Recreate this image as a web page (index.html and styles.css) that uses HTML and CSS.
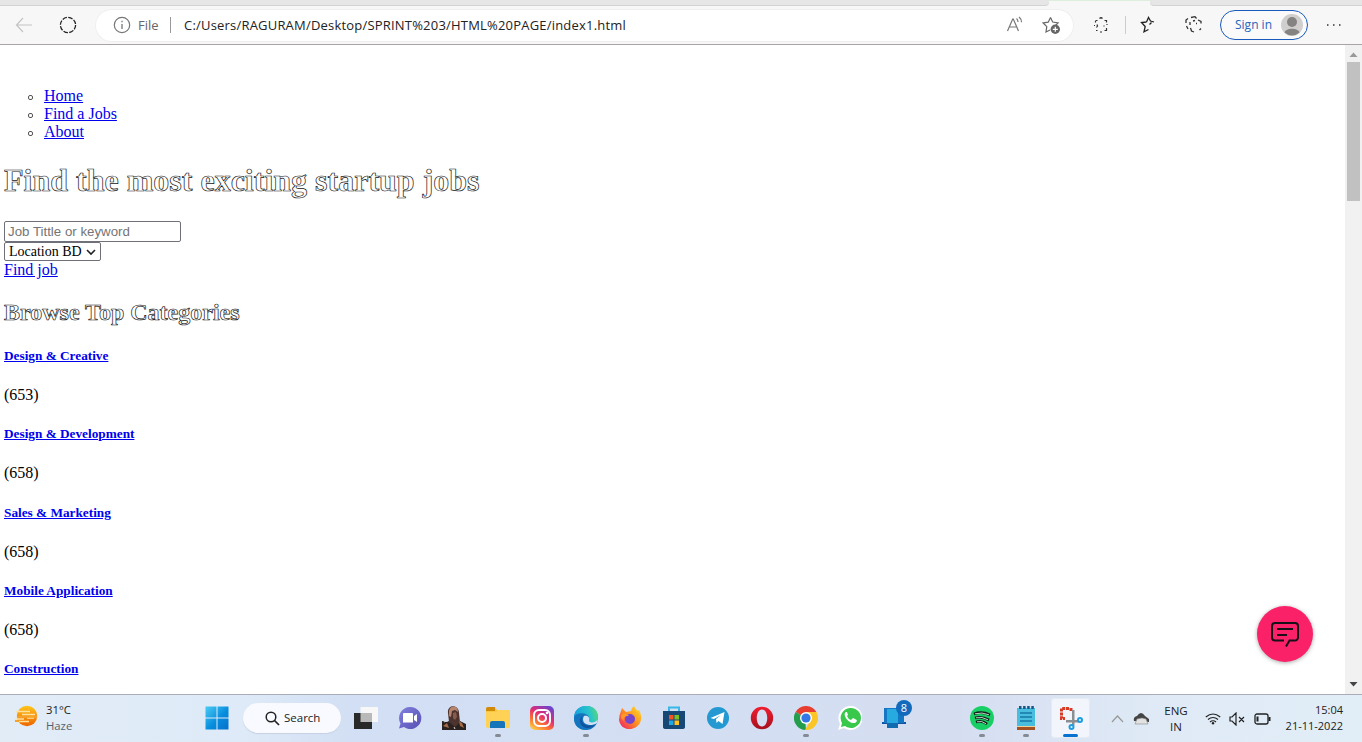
FILE: index.html
```html
<!DOCTYPE html>
<html lang="en">
<head>
<meta charset="utf-8">
<title>Find a Job</title>
<link rel="stylesheet" href="styles.css">
</head>
<body>
<div class="screen">
  <div class="tabs"><div class="tabs-left"></div><div class="tab-active"></div><div class="tabs-right"></div></div>
  <header class="toolbar">
    <svg class="back" width="18" height="16" viewBox="0 0 18 16"><path d="M8 1 1.5 8 8 15M1.5 8H17" fill="none" stroke="#c4c4c4" stroke-width="1.2"/></svg>
    <svg class="reload" width="18" height="18" viewBox="0 0 18 18"><circle cx="9" cy="9" r="7.6" fill="none" stroke="#222" stroke-width="1.3" stroke-dasharray="4.6 1.37"/></svg>
    <div class="address">
      <svg class="info" width="18" height="18" viewBox="0 0 18 18"><circle cx="9" cy="9" r="7.7" fill="none" stroke="#777" stroke-width="1.2"/><path d="M9 8v5M9 4.8v1.5" stroke="#777" stroke-width="1.3"/></svg>
      <span class="file">File</span><i class="bar"></i>
      <span class="url">C:/Users/RAGURAM/Desktop/SPRINT%203/HTML%20PAGE/index1.html</span>
      <svg class="aloud" width="18" height="18" viewBox="0 0 18 18"><path d="M1.500 15 6.700 3h.6l5.200 12M3.300 11h7.400M10.500 2.500c1 .8 1.500 2 1.500 3.400M13 1c1.600 1.200 2.500 3 2.500 5.300" fill="none" stroke="#777" stroke-width="1.200"/></svg>
      <svg class="fav" width="19" height="19" viewBox="0 0 19 19"><path d="M8.500 1.500 10.700 6l5.400.8-3.600 3.600M8.500 1.500 6.200 6.200 1.200 7l3.600 3.700L4 16l4-2" fill="none" stroke="#666" stroke-width="1.200"/><circle cx="13.300" cy="13.300" r="4.700" fill="#666"/><path d="M13.300 10.800v5M10.800 13.300h5" stroke="#fff" stroke-width="1.200"/></svg>
    </div>
    <svg class="ext" width="18" height="18" viewBox="0 0 18 18"><path d="M7.500 2.500q1.500-1.500 3 0M3.500 4.500h2M12.500 4.500h2v2M3.500 5v1.500M2 9.500h1M5 8.500l.5 1.500-1 1.500M15 8v1M12 9.500v1M14.500 12v2.500h-2M4 14.500h1.500M8 16h2" fill="none" stroke="#333" stroke-width="1.200"/></svg>
    <i class="tool-line"></i>
    <svg class="star" width="18" height="18" viewBox="0 0 18 18"><path d="M6.500 6 1.500 6.500 5.200 10.500 4 15.800l4.500-2.300M6.500 6 8.500 1.500 10.500 5l3.500 1M11.500 6.500 9.500 8.500" fill="none" stroke="#222" stroke-width="1.300"/></svg>
    <svg class="coll" width="18" height="18" viewBox="0 0 18 18"><path d="M3 13 1.500 10M1 7V4l2-1.500M6 1.500l4-.8 1.500 1.800M5 6v3M5.500 12l1 3 2.500 1M8 5l2-.5M13 4l3 1.500v2M11 7.500h1M14.500 14l1.500-1.500" fill="none" stroke="#333" stroke-width="1.300"/></svg>
    <div class="signin"><span>Sign in</span>
      <svg width="22" height="22" viewBox="0 0 22 22"><circle cx="11" cy="11" r="11" fill="#d1cfcd"/><circle cx="11" cy="8" r="5" fill="#858381"/><path d="M3.500 18.500C5 13.500 17 13.500 18.500 18.500A11 11 0 0 1 3.500 18.500" fill="#858381"/></svg>
    </div>
    <svg class="more" width="16" height="4" viewBox="0 0 16 4"><path d="M1 2h1.500M7 2h1.500M13 2h1.500" stroke="#333" stroke-width="1.600"/></svg>
  </header>

  <div class="viewport">
    <main class="page">
      <ul class="nav"><li><a href="#">Home</a></li><li><a href="#">Find a Jobs</a></li><li><a href="#">About</a></li></ul>
      <h1>Find the most exciting startup jobs</h1>
      <div class="field"><input class="keyword" type="text" placeholder="Job Tittle or keyword"></div>
      <div class="location"><span>Location BD</span><svg width="10" height="8" viewBox="0 0 10 8"><path d="m1 2 4 4 4-4" fill="none" stroke="#222" stroke-width="1.600"/></svg></div>
      <a class="find" href="#">Find job</a>
      <h2>Browse Top Categories</h2>
      <section class="category"><h5><a href="#">Design &amp; Creative</a></h5><p>(653)</p></section>
      <section class="category"><h5><a href="#">Design &amp; Development</a></h5><p>(658)</p></section>
      <section class="category"><h5><a href="#">Sales &amp; Marketing</a></h5><p>(658)</p></section>
      <section class="category"><h5><a href="#">Mobile Application</a></h5><p>(658)</p></section>
      <section class="category"><h5><a href="#">Construction</a></h5></section>
    </main>
    <div class="scrollbar">
      <svg width="9" height="5" viewBox="0 0 9 5"><path d="M.5 5 4.500.5l4 4.500z" fill="#999"/></svg>
      <i class="thumb"></i>
      <svg class="down" width="9" height="5" viewBox="0 0 9 5"><path d="M.5 0 4.500 4.500 8.500 0z" fill="#444"/></svg>
    </div>
    <div class="chat"><svg width="30" height="28" viewBox="0 0 30 28"><path d="M14 20.500H5a3 3 0 0 1-3-3V6a3 3 0 0 1 3-3h20a3 3 0 0 1 3 3v11.500a3 3 0 0 1-3 3h-5.500l-3.500 6M7 9h16M7 15h10" fill="none" stroke="#181018" stroke-width="2"/></svg></div>
  </div>

  <footer class="taskbar">
    <svg class="weather" width="24" height="22" viewBox="0 0 24 22"><defs><linearGradient id="sun" x2="0" y2="1"><stop stop-color="#ffc51b"/><stop offset="1" stop-color="#ee6500"/></linearGradient></defs><circle cx="12" cy="11" r="10.200" fill="url(#sun)"/><path d="M1 6.500h14M7 9.500h13M0 14h9M12 13h7M3 16.500h11" stroke="#ffe1a0" stroke-width="1.500"/><path d="M2 11.800h20M0 16h4" stroke="#f5a22b" stroke-width="1.800"/></svg>
    <div class="temp"><span>31°C</span><span class="haze">Haze</span></div>
    <svg class="start" width="24" height="24" viewBox="0 0 24 24"><defs><linearGradient id="win" x2="1" y2="1"><stop stop-color="#4bcbf4"/><stop offset=".55" stop-color="#078ddd"/><stop offset="1" stop-color="#0670cc"/></linearGradient></defs><path d="M.5.500h11v11H.5zM12.500.500h11v11h-11zM.5 12.500h11v11H.5zM12.500 12.500h11v11h-11z" fill="url(#win)"/></svg>
    <div class="search"><svg width="15" height="15" viewBox="0 0 15 15"><circle cx="6" cy="6" r="4.800" fill="none" stroke="#222" stroke-width="1.500"/><path d="m9.500 9.500 4.500 4.500" stroke="#222" stroke-width="1.700"/></svg><span>Search</span></div>
    <div class="apps">
      <div class="app"><svg viewBox="0 0 24 24"><path d="M6.500 1H24v15H6.500z" fill="#f7f7f7"/><path d="M0 7h18v16H0z" fill="#292929"/><path d="M6.500 7H18v9H6.500z" fill="#b9b9b9"/></svg></div>
      <div class="app"><svg viewBox="0 0 24 24"><defs><linearGradient id="teams" x2="1" y2="1"><stop stop-color="#8280df"/><stop offset="1" stop-color="#5650b3"/></linearGradient></defs><path d="M12 1a11 11 0 1 1-6 20l-5 1.500 1.500-5A11 11 0 0 1 12 1" fill="url(#teams)"/><path d="M6 7h8a1 1 0 0 1 1 1v8.500H5V8q0-1 1-1m10 3 3-2v8l-3-2z" fill="#fff"/></svg></div>
      <div class="app"><svg viewBox="0 0 24 24"><path d="M0 24v-9l5 1 4-2 9 1 6 3v6z" fill="#2b211e"/><path d="M6 7C5-2 17-2 17 7l1 9-5 5-6-5z" fill="#4c332d"/><path d="M7 5c1-6 9-6 9 1l-3-2-3 1-1 6-2-1z" fill="#b5856f"/><path d="m11 7 3-1 1 5-2 3-2-2z" fill="#855c4d"/><path d="m1 20 4-3 2 5zM17 15l3 2 2 5-4-2z" fill="#a46b49"/><path d="M2 16l2-1M12 21l1 2" stroke="#ddd"/></svg></div>
      <div class="app run"><svg viewBox="0 0 24 24"><path d="M0 3q0-2 2-2h7l2 3h11q2 0 2 2v15H0z" fill="#f8c73e"/><path d="M0 3q0-2 2-2h7v4H0z" fill="#d18b0b"/><path d="M0 6h10l2-2h10q2 0 2 2v15q0 1-2 1H2q-2 0-2-2z" fill="#ffd255"/><path d="M4 22v-5q0-2 2-2h11q2 0 2 2v5z" fill="#1674bb"/></svg></div>
      <div class="app"><svg viewBox="0 0 24 24"><defs><linearGradient id="insta" x1=".2" y1="1" x2=".8" y2="0"><stop stop-color="#fdc849"/><stop offset=".3" stop-color="#fb7134"/><stop offset=".6" stop-color="#e02a79"/><stop offset="1" stop-color="#6647d1"/></linearGradient></defs><rect width="24" height="24" rx="5" fill="url(#insta)"/><g fill="none" stroke="#fff" stroke-width="2"><rect x="4" y="4" width="16" height="16" rx="5"/><circle cx="12" cy="12" r="4"/></g><circle cx="17" cy="7" r="1.300" fill="#fff"/></svg></div>
      <div class="app run"><svg viewBox="0 0 24 24"><defs><linearGradient id="edge" y1=".2" x2="1"><stop stop-color="#17a1dd"/><stop offset=".6" stop-color="#29c5ca"/><stop offset="1" stop-color="#64dc65"/></linearGradient></defs><circle cx="12" cy="12" r="12" fill="#1675bd"/><path d="M0 11C1-4 24-4 24 11c0 5-5 7-9 5-2-1 0-2 0-4C14 6 3 6 0 11" fill="url(#edge)"/><path d="M9 9c-5 6 2 14 11 10-6 8-20 6-20-7 2-5 6-5 9-3" fill="#1275bd"/><path d="M10 10c-4 7 5 12 13 7l1-4c-3 5-10 4-9 1 1-3-2-5-5-4" fill="#d2e2f4"/><path d="M9 9c-4 6 1 13 12 10-5 5-14 4-15-4 0-2 1-4 3-6" fill="#13529f"/></svg></div>
      <div class="app"><svg viewBox="0 0 24 24"><defs><linearGradient id="fox" x1="1" x2="0" y2="1"><stop stop-color="#ffe52d"/><stop offset=".5" stop-color="#ff8d20"/><stop offset="1" stop-color="#ec156e"/></linearGradient></defs><path d="M3 5 4 2l4 4 5-1q0-3 3-5 1 3 4 5l1-1c10 18-17 27-20 10Q1 9 3 5" fill="url(#fox)"/><circle cx="12" cy="13" r="5" fill="#7546cc"/><path d="M4 8c3-1 5 0 7 2-5 0-6 2-5 5-3-2-4-5-2-7" fill="#ff9729"/></svg></div>
      <div class="app"><svg viewBox="0 0 24 24"><path d="M7 6V1.500h10V6" fill="none" stroke="#38b8e8" stroke-width="2"/><path d="M1 5h22v16q0 2-3 2H4q-3 0-3-2z" fill="#174774"/><path d="M7 9h4.500v4.500H7z" fill="#f45125"/><path d="M12.500 9H17v4.500h-4.500z" fill="#80bd20"/><path d="M7 14.500h4.500V19H7z" fill="#20a7e8"/><path d="M12.500 14.500H17V19h-4.500z" fill="#ffc221"/></svg></div>
      <div class="app"><svg viewBox="0 0 24 24"><circle cx="12" cy="12" r="11" fill="#2499d1"/><path d="m4.500 12 14-6-2 12-4-3-2 2-.5-4 5-4-7 4z" fill="#fff"/></svg></div>
      <div class="app"><svg viewBox="0 0 24 24"><defs><linearGradient id="opera" x2="0" y2="1"><stop stop-color="#f21d32"/><stop offset="1" stop-color="#a6111d"/></linearGradient></defs><path fill-rule="evenodd" d="M12 .8a11.200 11.200 0 1 1 0 22.400A11.200 11.200 0 0 1 12 .8m0 2.700c-7 0-7 17 0 17s7-17 0-17" fill="url(#opera)"/></svg></div>
      <div class="app run"><svg viewBox="0 0 24 24"><path d="M12 12 1.600 6A12 12 0 0 1 22.400 6z" fill="#e83e30"/><path d="M12 12h-1l1 12A12 12 0 0 1 1.600 6z" fill="#249d4c"/><path d="M12 6h10.400A12 12 0 0 1 11 24l5-9z" fill="#fbc625"/><circle cx="12" cy="12" r="6" fill="#fff"/><circle cx="12" cy="12" r="4.600" fill="#3478e7"/></svg></div>
      <div class="app"><svg viewBox="0 0 24 24"><path d="M12 0a12 12 0 1 1-6 22l-6 2 2-6A12 12 0 0 1 12 0" fill="#fff"/><path d="M12 2a10 10 0 1 1-5 18l-4 1 1-4A10 10 0 0 1 12 2" fill="#39c84c"/><path d="M8 6c-4 2 2 12 9 11 2-1 3-3 0-4l-2-1-2 2q-3-1-4-4l1-1-1-3z" fill="#fff"/></svg></div>
      <div class="app"><svg viewBox="0 0 24 24"><path d="M0 16h24v2H0z" fill="#1055a5"/><path d="M2 2h13v15H2z" fill="#1677c5"/><path d="M5 3h11v19H5z" fill="#27aae0"/><path d="M16 6h6v11h-6z" fill="#1177c2"/><path d="M5 17h11v5H5z" fill="#106caf"/></svg><b class="badge">8</b></div>
      <i class="gap"></i>
      <div class="app run"><svg viewBox="0 0 24 24"><circle cx="12" cy="12" r="12" fill="#17cf65"/><path d="M4 8q8-3 16 1M5 12q7-2 14 2M6 16q6-2 11 2" fill="none" stroke="#151b19" stroke-width="2.800"/><path d="M5 7.800q7-2 14 1M6 11.800q6-1.500 12 2M7 15.800q5-1.500 9 2" fill="none" stroke="#c5eed5" stroke-width=".9"/></svg></div>
      <div class="app run"><svg viewBox="0 0 24 24"><path d="M3 2h18v20H3z" fill="#48bddd"/><path d="M5 1.500h15" stroke="#165787" stroke-width="3" stroke-dasharray="2.500 1.600"/><path d="M6 7h12M6 11h12M6 15h12" stroke="#1478a5" stroke-width="1.700"/><path d="M3 21h18v3H3z" fill="#a55222"/><path d="M3 20.500h18" stroke="#efd19c"/></svg></div>
      <div class="app run active"><svg viewBox="0 0 24 24"><path d="M10 2.500H2.500v10H6M12 2v3" fill="none" stroke="#d83b25" stroke-width="3" stroke-dasharray="3 .8"/><path d="M13 4v10H7v2.500h6v3h2.500v-3H20V14h-4.500V4z" fill="#8b8f93"/><g fill="none" stroke="#1e9ee1" stroke-width="2"><circle cx="21" cy="14" r="2"/><circle cx="12.500" cy="21" r="2"/></g></svg></div>
    </div>
    <div class="tray">
      <svg class="up" width="13" height="8" viewBox="0 0 13 8"><path d="m1 7 5.500-6L12 7" fill="none" stroke="#999" stroke-width="1.200"/></svg>
      <svg class="cloud" width="17" height="13" viewBox="0 0 17 13"><path d="M1 9Q0 5 4 4q4-6 8 0l4 3v3z" fill="#444"/><path d="m4 7 5-1 4 1 2 5H2z" fill="#e2e2e2" stroke="#888" stroke-width=".6"/></svg>
      <div class="lang"><span>ENG</span><span>IN</span></div>
      <svg class="wifi" width="16" height="12" viewBox="0 0 16 12"><g fill="none" stroke="#222" stroke-width="1.200"><path d="M.8 4q7.200-6 14.400 0M3 6.500q5-4 10 0M5 9q3-2.500 6 0"/></g><circle cx="8" cy="10.300" r="1.200" fill="#222"/></svg>
      <svg class="sound" width="16" height="14" viewBox="0 0 16 14"><path d="M1 5h2l4-4v12L3 9H1zM10 5l5 5M15 5l-5 5" fill="none" stroke="#222" stroke-width="1.200"/></svg>
      <svg class="battery" width="17" height="12" viewBox="0 0 17 12"><rect x="1" y="1" width="13" height="10" rx="2" fill="none" stroke="#222" stroke-width="1.300"/><path d="M3.500 3.500v5M15.500 4v4" stroke="#222" stroke-width="2"/></svg>
      <div class="clock"><span>15:04</span><span>21-11-2022</span></div>
    </div>
  </footer>
</div>
</body>
</html>
```

FILE: styles.css
```css
*, *::before, *::after { box-sizing: border-box; }
body { margin: 0; overflow: hidden; font-family: "Liberation Serif", serif; font-size: 16px; line-height: 18px; color: #000; background: #fff; }
svg { display: block; flex: none; }
a { color: #0000ee; text-decoration: underline; }
.screen { width: 1362px; height: 742px; display: flex; flex-direction: column; }

.tabs { display: flex; height: 6px; flex: none; background: #f7f7f7; }
.tabs-left { width: 1049px; background: #e6e6e6; border-bottom: 1px solid #d3d3d3; border-radius: 0 0 4px 0; }
.tab-active { width: 101px; border-top: 1px solid #dcefdc; }
.tabs-right { flex: 1; background: #e6e6e6; border-bottom: 1px solid #d3d3d3; border-radius: 0 0 0 4px; }
.toolbar { height: 39px; flex: none; display: flex; align-items: center; background: #f7f7f7; border-bottom: 1px solid #aaa5a5; font-family: "Open Sans", sans-serif; font-size: 13px; padding-left: 15px; }
.reload { margin-left: 26px; }
.address { width: 977px; height: 31px; margin-left: 19px; flex: none; display: flex; align-items: center; background: #fff; border-radius: 16px; box-shadow: 0 0 0 1px #efefef; padding-left: 17px; }
.file { margin-left: 7px; width: 24px; color: #666; }
.bar { width: 1px; height: 16px; margin-left: 8px; background: #999; }
.url { width: 822px; margin-left: 13px; color: #222; white-space: nowrap; letter-spacing: .2px; }
.fav { margin-left: 18px; }
.ext { margin-left: 19px; }
.tool-line { width: 1px; height: 18px; margin-left: 15px; background: #ccc; }
.star { margin-left: 14px; }
.coll { margin-left: 27px; }
.signin { width: 88px; height: 30px; margin-left: 17px; flex: none; display: flex; align-items: center; justify-content: space-between; border: 1px solid #195abd; border-radius: 15px; padding: 0 4px 0 14px; background: #fafafa; color: #2864ba; font-size: 12px; }
.more { margin-left: 18px; }

.viewport { position: relative; height: 649px; flex: none; display: flex; }
.page { flex: 1; padding: 42px 0 0 4px; overflow: hidden; }
.nav { list-style: none; margin: 0; padding-left: 24px; }
.nav li { display: flex; align-items: center; }
.nav li::before { content: ""; width: 5px; height: 5px; margin: 2px 11px 0 0; border: 1px solid #555; border-radius: 2px; }
h1 { margin: 21px 0 0; font-size: 32px; line-height: 37px; color: #fff; -webkit-text-stroke: .7px #151515; }
.field { height: 21px; margin-top: 22px; display: flex; }
.keyword { width: 177px; height: 21px; padding: 1px 3px; border: 1px solid #70707a; border-radius: 2px; background: #fff; font-family: "Liberation Sans", sans-serif; font-size: 13.300px; }
.keyword::placeholder { color: #757575; }
.location { width: 97px; height: 19px; display: flex; align-items: center; justify-content: space-between; padding: 0 4px; border: 1px solid #70707a; border-radius: 2px; font-size: 14px; line-height: 17px; }
.find { display: block; width: max-content; }
h2 { margin: 20px 0 0; font-size: 24px; line-height: 27px; color: #fff; -webkit-text-stroke: .7px #151515; }
.category { height: 78.250px; }
h2 + .category { margin-top: 22px; }
h5 { margin: 0; font-size: 13.280px; line-height: 16px; }
.category p { margin: 22px 0 0; }
.scrollbar { width: 17px; flex: none; display: flex; flex-direction: column; align-items: center; padding: 7px 0; background: #f1f1f1; }
.thumb { width: 13px; height: 139px; margin-top: 5px; background: #c1c1c1; }
.down { margin-top: auto; }
.chat { position: absolute; left: 1257px; top: 561px; width: 56px; height: 56px; border-radius: 50%; background: #fa2169; box-shadow: 0 1px 4px #aaa; display: flex; align-items: center; justify-content: center; }

.taskbar { height: 48px; flex: none; display: flex; align-items: center; border-top: 1px solid #a8adb8; background: linear-gradient(90deg, #e1ecf7 0%, #deeaf7 18%, #d2dff4 26%, #d5def1 70%, #dfeaf6 85%, #e1edf7 100%); color: #222; font-family: "Open Sans", sans-serif; font-size: 11px; line-height: 16px; }
.weather { margin: -5px 0 0 15px; }
.temp { display: flex; flex-direction: column; width: 60px; margin: -2px 0 0 7px; font-size: 11.300px; }
.haze { color: #5b6066; }
.start { margin: -1px 0 0 99px; }
.search { width: 98px; height: 30px; flex: none; margin: -1px 0 0 14px; display: flex; align-items: center; border-radius: 15px; background: #f8faff; padding-left: 22px; gap: 4px; box-shadow: 0 1px 1px #c6d1e3; font-size: 11.500px; }
.apps { display: flex; margin: -1px 0 0 3px; flex: none; }
.app { position: relative; width: 44px; height: 40px; display: flex; align-items: center; justify-content: center; }
.app > svg { width: 24px; height: 24px; }
.gap { width: 44px; }
.run::after { content: ""; position: absolute; left: 19px; bottom: 1px; width: 6px; height: 3px; border-radius: 2px; background: #858b95; }
.active { background: #f2f6fc; box-shadow: inset 0 0 0 1px #e5ebf3; border-radius: 4px; width: 39px; margin-left: 3px; }
.active::after { left: 12px; bottom: 1px; width: 15px; background: #0873cf; }
.badge { position: absolute; left: 24px; top: 2px; width: 16px; height: 16px; border-radius: 50%; background: #116abb; color: #fff; text-align: center; font-size: 11px; font-weight: 400; }
.tray { flex: 1; display: flex; align-items: center; padding: 0 19px 0 21px; }
.cloud { margin-left: 9px; }
.lang { width: 30px; margin-left: 11px; display: flex; flex-direction: column; align-items: center; font-size: 11.500px; }
.wifi { margin-left: 14px; }
.sound { margin-left: 8px; }
.battery { margin-left: 9px; }
.clock { margin: -2px 0 0 auto; display: flex; flex-direction: column; align-items: flex-end; white-space: nowrap; }
```
